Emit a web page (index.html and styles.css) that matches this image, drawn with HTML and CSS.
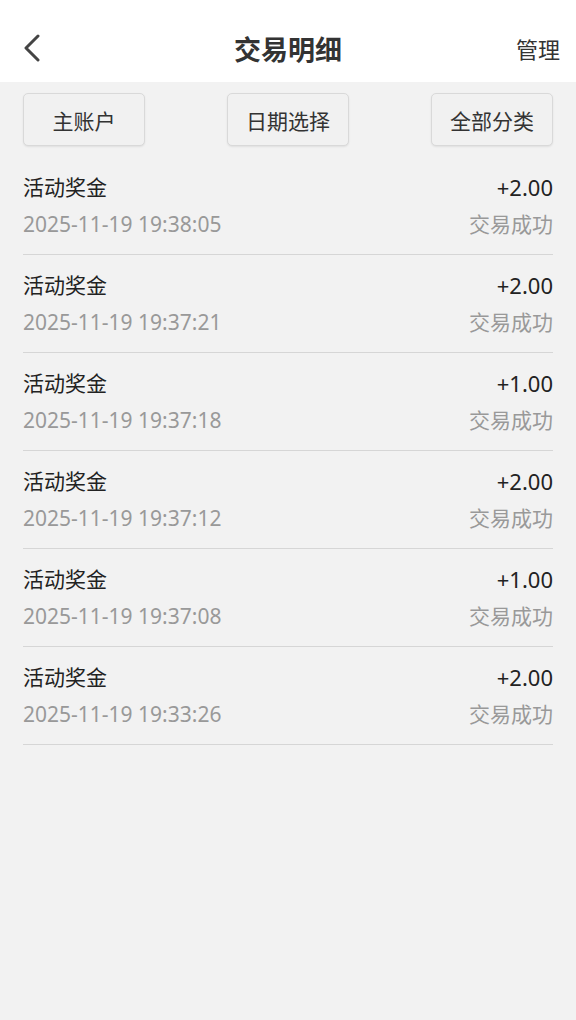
FILE: index.html
```html
<!DOCTYPE html>
<html lang="zh-CN">
<head>
    <meta charset="UTF-8">
    <meta name="viewport" content="width=device-width, initial-scale=1.0">
    <title>交易明细</title>
    <link rel="stylesheet" href="styles.css">
</head>
<body>
    <header class="topbar">
        <a class="back" href="#">
            <svg width="18" height="28" viewBox="0 0 18 28">
                <path d="M15 2 L3 14 L15 26" fill="none" stroke="#444" stroke-width="3" stroke-linecap="round" stroke-linejoin="round"/>
            </svg>
        </a>
        <h1 class="title">交易明细</h1>
        <a class="manage" href="#">管理</a>
    </header>

    <div class="filters">
        <button class="filter">主账户</button>
        <button class="filter">日期选择</button>
        <button class="filter">全部分类</button>
    </div>

    <ul class="records">
        <li class="record">
            <div class="line"><span class="name">活动奖金</span><span class="amount">+2.00</span></div>
            <div class="line"><span class="time">2025-11-19 19:38:05</span><span class="status">交易成功</span></div>
        </li>
        <li class="record">
            <div class="line"><span class="name">活动奖金</span><span class="amount">+2.00</span></div>
            <div class="line"><span class="time">2025-11-19 19:37:21</span><span class="status">交易成功</span></div>
        </li>
        <li class="record">
            <div class="line"><span class="name">活动奖金</span><span class="amount">+1.00</span></div>
            <div class="line"><span class="time">2025-11-19 19:37:18</span><span class="status">交易成功</span></div>
        </li>
        <li class="record">
            <div class="line"><span class="name">活动奖金</span><span class="amount">+2.00</span></div>
            <div class="line"><span class="time">2025-11-19 19:37:12</span><span class="status">交易成功</span></div>
        </li>
        <li class="record">
            <div class="line"><span class="name">活动奖金</span><span class="amount">+1.00</span></div>
            <div class="line"><span class="time">2025-11-19 19:37:08</span><span class="status">交易成功</span></div>
        </li>
        <li class="record">
            <div class="line"><span class="name">活动奖金</span><span class="amount">+2.00</span></div>
            <div class="line"><span class="time">2025-11-19 19:33:26</span><span class="status">交易成功</span></div>
        </li>
    </ul>
</body>
</html>
```

FILE: styles.css
```css
body {
    font-family: "Noto Sans", "Noto Sans CJK SC", sans-serif;
    margin: 0;
    min-height: 1020px;
    background-color: #f2f2f2;
}

.topbar {
    height: 68px;
    padding: 14px 16px 0;
    background-color: #fff;
    display: flex;
    align-items: center;
    justify-content: space-between;
}

.back {
    display: flex;
    width: 60px;
    padding-left: 7px;
}

.title {
    margin: 0;
    font-size: 27px;
    font-weight: bold;
    color: #333;
}

.manage {
    width: 67px;
    text-align: right;
    font-size: 22px;
    color: #333;
    text-decoration: none;
}

.filters {
    display: flex;
    justify-content: space-between;
    padding: 11px 23px;
}

.filter {
    width: 122px;
    height: 53px;
    font-family: inherit;
    font-size: 21px;
    color: #333;
    background-color: #f1f1f1;
    border: 1px solid #d9d9d9;
    border-radius: 5px;
    box-shadow: 0 1px 2px rgba(0, 0, 0, 0.08);
}

.records {
    list-style: none;
    margin: 0;
    padding: 0 23px;
}

.record {
    padding: 15px 0;
    border-bottom: 1px solid #d6d6d6;
    display: flex;
    flex-direction: column;
    gap: 7px;
}

.line {
    display: flex;
    justify-content: space-between;
    line-height: 30px;
    font-size: 21px;
}

.name,
.amount {
    color: #222;
}

.amount {
    font-size: 22px;
}

.time,
.status {
    color: #999;
}
```
